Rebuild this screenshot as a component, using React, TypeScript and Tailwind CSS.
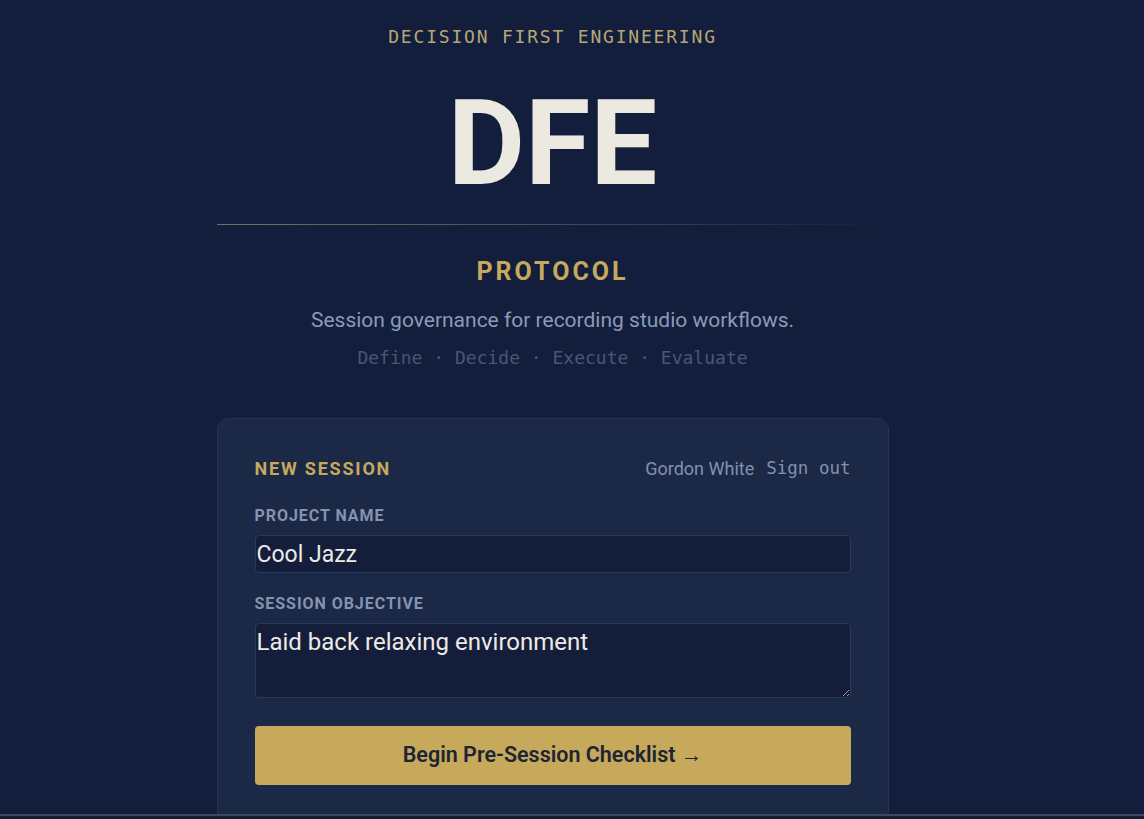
const sans = { fontFamily: 'Roboto, "Noto Sans", sans-serif' };
const mono = { fontFamily: '"DejaVu Sans Mono", "Liberation Mono", monospace' };

function Label({ children }: { children: string }) {
  return (
    <label
      className="block text-[16px] leading-[22px] font-bold tracking-[0.06em] text-[#8593b1]"
      style={sans}
    >
      {children}
    </label>
  );
}

export default function App() {
  return (
    <div className="min-h-screen bg-[#131e3c] flex flex-col items-center pr-[39px] pt-[25px] overflow-hidden" style={sans}>
      <div className="w-[672px] flex flex-col items-center">
        <p className="text-[18px] leading-6 tracking-[0.1em] text-[#b8a677]" style={mono}>
          DECISION FIRST ENGINEERING
        </p>
        <h1 className="mt-[35px] text-[119px] leading-none font-bold text-[#ebe9e0]">DFE</h1>
        <div className="mt-[21px] h-px w-full bg-gradient-to-r from-[#77705f] via-[#4a4a55] to-transparent" />
        <h2 className="mt-[31px] text-[25px] leading-8 font-bold tracking-[0.12em] text-[#c6a95e]">PROTOCOL</h2>
        <p className="mt-[18px] text-[21px] leading-7 text-[#8a9aba]">
          Session governance for recording studio workflows.
        </p>
        <p className="mt-[12px] text-[18px] leading-6 text-[#485677]" style={mono}>
          Define · Decide · Execute · Evaluate
        </p>

        <div className="mt-[48px] w-full rounded-xl border border-[#263454] bg-[#1b2846] p-[37px]">
          <div className="flex items-center justify-between h-6">
            <span className="text-[18px] font-bold tracking-[0.1em] text-[#c6a95e]">NEW SESSION</span>
            <div className="flex items-center gap-3 text-[#8290b0]">
              <span className="text-[18px]">Gordon White</span>
              <span className="text-[17.5px]" style={mono}>Sign out</span>
            </div>
          </div>

          <div className="mt-[25px]">
            <Label>PROJECT NAME</Label>
            <input
              defaultValue="Cool Jazz"
              className="mt-2 block w-full h-[38px] rounded border border-[#2a3859] bg-[#141d39] px-[1px] text-[23px] text-[#ecebe6] outline-none"
              style={sans}
            />
          </div>

          <div className="mt-[20px]">
            <Label>SESSION OBJECTIVE</Label>
            <textarea
              defaultValue="Laid back relaxing environment"
              className="mt-2 block w-full h-[75px] rounded border border-[#2a3859] bg-[#141d39] px-[1px] pt-[4px] text-[24px] leading-[28px] text-[#ecebe6] outline-none"
              style={sans}
            />
          </div>

          <button className="mt-[28px] w-full h-[59px] rounded bg-[#c6a95b] text-[21.5px] font-semibold text-[#1d2434]">
            Begin Pre-Session Checklist →
          </button>
        </div>
      </div>
      <div className="fixed bottom-0 inset-x-0 h-[5px] border-t-2 border-[#3a4a5e] bg-[#142030]" />
    </div>
  );
}
